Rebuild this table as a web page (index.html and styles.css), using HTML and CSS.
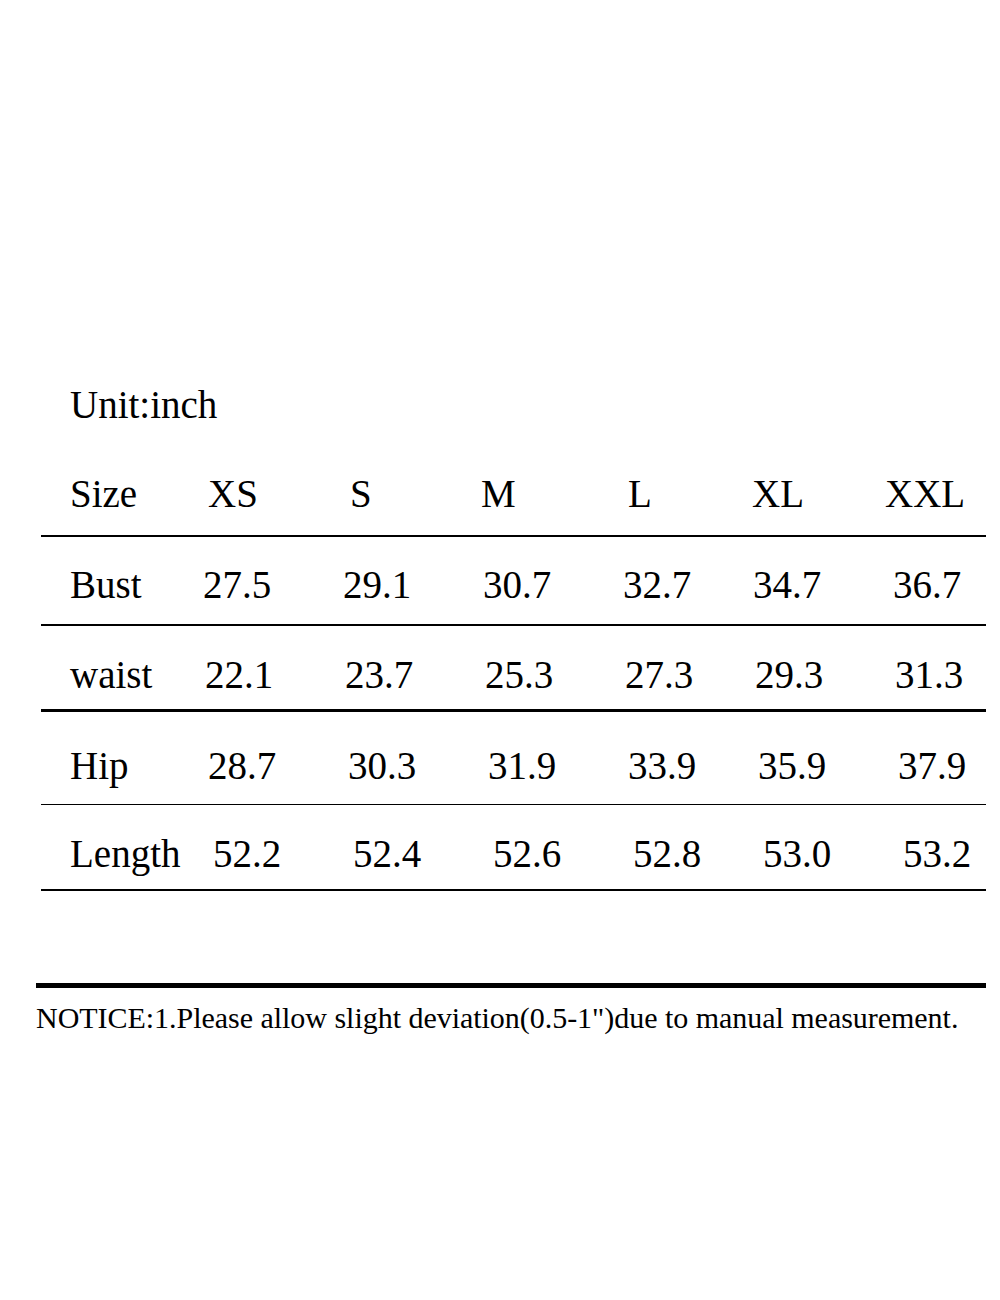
FILE: index.html
```html
<!DOCTYPE html>
<html lang="en">
<head>
<meta charset="utf-8">
<title>Size chart</title>
<link rel="stylesheet" href="styles.css">
</head>
<body>
<main class="page">
  <p class="unit">Unit:inch</p>
  <section class="table">
    <div class="row row-head">
      <span class="cell label">Size</span>
      <span class="cell val h1">XS</span>
      <span class="cell val h2">S</span>
      <span class="cell val h3">M</span>
      <span class="cell val h4">L</span>
      <span class="cell val h5">XL</span>
      <span class="cell val h6">XXL</span>
    </div>
    <div class="row row-bust">
      <span class="cell label">Bust</span>
      <span class="cell val">27.5</span>
      <span class="cell val">29.1</span>
      <span class="cell val">30.7</span>
      <span class="cell val">32.7</span>
      <span class="cell val">34.7</span>
      <span class="cell val">36.7</span>
    </div>
    <div class="row row-waist">
      <span class="cell label">waist</span>
      <span class="cell val">22.1</span>
      <span class="cell val">23.7</span>
      <span class="cell val">25.3</span>
      <span class="cell val">27.3</span>
      <span class="cell val">29.3</span>
      <span class="cell val">31.3</span>
    </div>
    <div class="row row-hip">
      <span class="cell label">Hip</span>
      <span class="cell val">28.7</span>
      <span class="cell val">30.3</span>
      <span class="cell val">31.9</span>
      <span class="cell val">33.9</span>
      <span class="cell val">35.9</span>
      <span class="cell val">37.9</span>
    </div>
    <div class="row row-length">
      <span class="cell label">Length</span>
      <span class="cell val">52.2</span>
      <span class="cell val">52.4</span>
      <span class="cell val">52.6</span>
      <span class="cell val">52.8</span>
      <span class="cell val">53.0</span>
      <span class="cell val">53.2</span>
    </div>
  </section>
  <hr class="rule">
  <p class="notice">NOTICE:1.Please allow slight deviation(0.5-1")due to manual measurement.</p>
</main>
</body>
</html>
```
FILE: styles.css
```css
html, body {
  margin: 0;
  padding: 0;
  background: #ffffff;
}

body {
  width: 1000px;
  height: 1300px;
  overflow: hidden;
  font-family: "Liberation Serif", "Times New Roman", serif;
  color: #000000;
}

.page {
  padding-top: 385px;
}

.unit {
  margin: 0 0 0 70px;
  font-size: 39px;
  line-height: 39px;
}

.table {
  margin-left: 41px;
  width: 945px;
}

.row {
  display: grid;
  grid-template-columns: 133px 140px 140px 140px 130px 140px 1fr;
  padding-left: 29px;
  font-size: 39px;
  line-height: 39px;
  border-bottom: 2px solid #000000;
  white-space: nowrap;
}

.row-head {
  padding-top: 50px;
  padding-bottom: 22px;
}

.row-bust {
  padding-top: 28px;
  padding-bottom: 20px;
}

.row-waist {
  padding-top: 29px;
  padding-bottom: 15px;
  border-bottom-width: 3px;
}

.row-hip {
  padding-top: 34px;
  padding-bottom: 19px;
  border-bottom-width: 1px;
}

.row-length {
  padding-top: 29px;
  padding-bottom: 16px;
}

.row-waist .val { padding-left: 2px; }
.row-hip .val { padding-left: 5px; }
.row-length .val { padding-left: 10px; }

.row-head .h1 { padding-left: 5px; }
.row-head .h2 { padding-left: 7px; }
.row-head .h3 { margin-left: -2px; }
.row-head .h4 { padding-left: 5px; }
.row-head .h5 { margin-left: -1px; }
.row-head .h6 { margin-left: -8px; }

.rule {
  margin: 92px 0 0 36px;
  width: 950px;
  height: 5px;
  border: 0;
  background: #000000;
}

.notice {
  margin: 15px 0 0 36px;
  font-size: 30px;
  line-height: 30px;
  white-space: nowrap;
  letter-spacing: -0.03px;
}
```
